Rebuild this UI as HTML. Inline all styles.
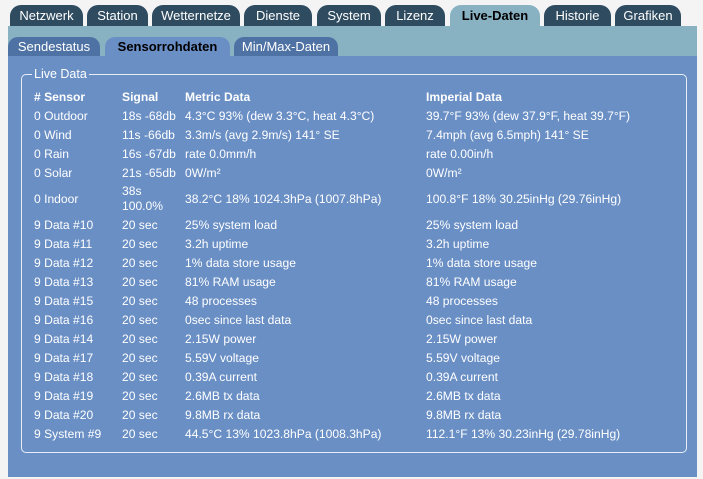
<!DOCTYPE html><html><head><style>
body{margin:0;width:703px;height:479px;background:#f4f4f4;font-family:"Liberation Sans",Arial,sans-serif;font-size:12.1px;position:relative;overflow:hidden}
.t{position:absolute;top:5px;height:21px;background:#2e4b60;color:#fff;border-radius:11px 11px 0 0;text-align:center;line-height:22px;font-size:13px}
.t.a{background:#88b1c2;color:#000;font-weight:bold}
.band{position:absolute;left:8px;top:26px;width:689px;height:30px;background:#88b1c2}
.s{position:absolute;top:37px;height:19px;background:#4e72a4;color:#fff;border-radius:10px 10px 0 0;text-align:center;line-height:20px;font-size:13px}
.s.a{background:#6a8fc5;color:#000;font-weight:bold}
.main{position:absolute;left:8px;top:56px;width:689px;height:421px;background:#6a8fc5}
.fs{position:absolute;left:21px;top:74px;width:664px;height:377px;border:1px solid #e8eef8;border-radius:5px}
.lg{position:absolute;left:32px;top:67px;background:#6a8fc5;color:#fff;padding:0 2px;font-size:12.5px}
.r{position:absolute;color:#fff;white-space:nowrap}
.h{font-weight:bold}
</style></head><body>
<div class="t" style="left:10px;width:73px">Netzwerk</div>
<div class="t" style="left:87px;width:61px">Station</div>
<div class="t" style="left:152px;width:88px">Wetternetze</div>
<div class="t" style="left:244px;width:68px">Dienste</div>
<div class="t" style="left:317px;width:64px">System</div>
<div class="t" style="left:385px;width:60px">Lizenz</div>
<div class="t a" style="left:450px;width:90px">Live-Daten</div>
<div class="t" style="left:544px;width:67px">Historie</div>
<div class="t" style="left:615px;width:66px">Grafiken</div>
<div class="band"></div>
<div class="s" style="left:8px;width:92px">Sendestatus</div>
<div class="s a" style="left:105px;width:125px">Sensorrohdaten</div>
<div class="s" style="left:234px;width:104px">Min/Max-Daten</div>
<div class="main"></div>
<div class="fs"></div>
<div class="lg">Live Data</div>
<div class="r h" style="left:34px;top:90px">#&nbsp;Sensor</div><div class="r h" style="left:122px;top:90px">Signal</div><div class="r h" style="left:185px;top:90px">Metric Data</div><div class="r h" style="left:426px;top:90px">Imperial Data</div>
<div class="r" style="left:34px;top:109px">0 Outdoor</div><div class="r" style="left:122px;top:109px">18s -68db</div><div class="r" style="left:185px;top:109px">4.3°C 93% (dew 3.3°C, heat 4.3°C)</div><div class="r" style="left:426px;top:109px">39.7°F 93% (dew 37.9°F, heat 39.7°F)</div>
<div class="r" style="left:34px;top:128px">0 Wind</div><div class="r" style="left:122px;top:128px">11s -66db</div><div class="r" style="left:185px;top:128px">3.3m/s (avg 2.9m/s) 141° SE</div><div class="r" style="left:426px;top:128px">7.4mph (avg 6.5mph) 141° SE</div>
<div class="r" style="left:34px;top:147px">0 Rain</div><div class="r" style="left:122px;top:147px">16s -67db</div><div class="r" style="left:185px;top:147px">rate 0.0mm/h</div><div class="r" style="left:426px;top:147px">rate 0.00in/h</div>
<div class="r" style="left:34px;top:166px">0 Solar</div><div class="r" style="left:122px;top:166px">21s -65db</div><div class="r" style="left:185px;top:166px">0W/m²</div><div class="r" style="left:426px;top:166px">0W/m²</div>
<div class="r" style="left:34px;top:192px">0 Indoor</div><div class="r" style="left:122px;top:184px;line-height:15px">38s<br>100.0%</div><div class="r" style="left:185px;top:192px">38.2°C 18% 1024.3hPa (1007.8hPa)</div><div class="r" style="left:426px;top:192px">100.8°F 18% 30.25inHg (29.76inHg)</div>
<div class="r" style="left:34px;top:218px">9 Data #10</div><div class="r" style="left:122px;top:218px">20 sec</div><div class="r" style="left:185px;top:218px">25% system load</div><div class="r" style="left:426px;top:218px">25% system load</div>
<div class="r" style="left:34px;top:237px">9 Data #11</div><div class="r" style="left:122px;top:237px">20 sec</div><div class="r" style="left:185px;top:237px">3.2h uptime</div><div class="r" style="left:426px;top:237px">3.2h uptime</div>
<div class="r" style="left:34px;top:256px">9 Data #12</div><div class="r" style="left:122px;top:256px">20 sec</div><div class="r" style="left:185px;top:256px">1% data store usage</div><div class="r" style="left:426px;top:256px">1% data store usage</div>
<div class="r" style="left:34px;top:275px">9 Data #13</div><div class="r" style="left:122px;top:275px">20 sec</div><div class="r" style="left:185px;top:275px">81% RAM usage</div><div class="r" style="left:426px;top:275px">81% RAM usage</div>
<div class="r" style="left:34px;top:294px">9 Data #15</div><div class="r" style="left:122px;top:294px">20 sec</div><div class="r" style="left:185px;top:294px">48 processes</div><div class="r" style="left:426px;top:294px">48 processes</div>
<div class="r" style="left:34px;top:313px">9 Data #16</div><div class="r" style="left:122px;top:313px">20 sec</div><div class="r" style="left:185px;top:313px">0sec since last data</div><div class="r" style="left:426px;top:313px">0sec since last data</div>
<div class="r" style="left:34px;top:332px">9 Data #14</div><div class="r" style="left:122px;top:332px">20 sec</div><div class="r" style="left:185px;top:332px">2.15W power</div><div class="r" style="left:426px;top:332px">2.15W power</div>
<div class="r" style="left:34px;top:351px">9 Data #17</div><div class="r" style="left:122px;top:351px">20 sec</div><div class="r" style="left:185px;top:351px">5.59V voltage</div><div class="r" style="left:426px;top:351px">5.59V voltage</div>
<div class="r" style="left:34px;top:370px">9 Data #18</div><div class="r" style="left:122px;top:370px">20 sec</div><div class="r" style="left:185px;top:370px">0.39A current</div><div class="r" style="left:426px;top:370px">0.39A current</div>
<div class="r" style="left:34px;top:389px">9 Data #19</div><div class="r" style="left:122px;top:389px">20 sec</div><div class="r" style="left:185px;top:389px">2.6MB tx data</div><div class="r" style="left:426px;top:389px">2.6MB tx data</div>
<div class="r" style="left:34px;top:408px">9 Data #20</div><div class="r" style="left:122px;top:408px">20 sec</div><div class="r" style="left:185px;top:408px">9.8MB rx data</div><div class="r" style="left:426px;top:408px">9.8MB rx data</div>
<div class="r" style="left:34px;top:427px">9 System #9</div><div class="r" style="left:122px;top:427px">20 sec</div><div class="r" style="left:185px;top:427px">44.5°C 13% 1023.8hPa (1008.3hPa)</div><div class="r" style="left:426px;top:427px">112.1°F 13% 30.23inHg (29.78inHg)</div>
</body></html>
